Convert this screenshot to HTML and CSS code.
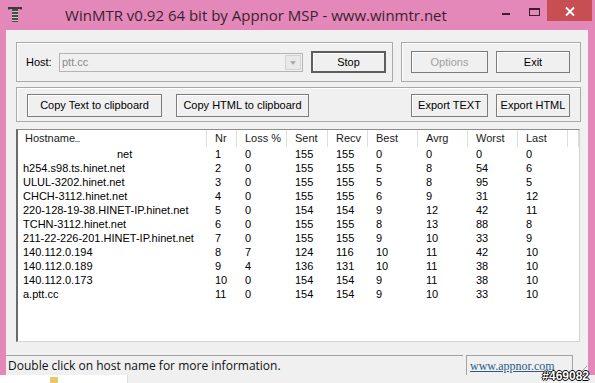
FILE: index.html
```html
<!DOCTYPE html>
<html lang="en">
<head>
    <meta charset="UTF-8">
    <title>WinMTR v0.92 64 bit by Appnor MSP - www.winmtr.net</title>
    <link rel="stylesheet" href="styles.css">
</head>
<body>
    <div class="window">
        <div class="titlebar">
            <svg class="app-icon" viewBox="0 0 14 15" xmlns="http://www.w3.org/2000/svg">
                <rect x="0" y="0" width="14" height="2" fill="#3a3a3a"/>
                <rect x="0" y="2" width="2" height="1" fill="#777"/>
                <rect x="12" y="2" width="2" height="1" fill="#777"/>
                <rect x="4" y="2" width="6" height="13" fill="#4a4a4a"/>
                <rect x="4" y="4" width="6" height="1" fill="#c8c8c8"/>
                <rect x="4" y="7" width="6" height="1" fill="#c8c8c8"/>
                <rect x="4" y="10" width="6" height="1" fill="#c8c8c8"/>
                <rect x="4" y="13" width="6" height="1" fill="#c8c8c8"/>
            </svg>
            <div class="title">WinMTR v0.92 64 bit by Appnor MSP - www.winmtr.net</div>
            <div class="caption-buttons">
                <div class="cap-btn cap-min">
                    <svg viewBox="0 0 29 20" xmlns="http://www.w3.org/2000/svg"><rect x="12" y="13" width="8" height="2" fill="#3b1f30"/></svg>
                </div>
                <div class="cap-btn cap-max">
                    <svg viewBox="0 0 28 20" xmlns="http://www.w3.org/2000/svg"><rect x="10.5" y="8.5" width="10" height="7" fill="none" stroke="#3b1f30"/><rect x="10" y="8" width="11" height="2" fill="#3b1f30"/></svg>
                </div>
                <div class="cap-btn cap-close">
                    <svg viewBox="0 0 45 20" xmlns="http://www.w3.org/2000/svg"><path d="M19 7 L27 15 M27 7 L19 15" stroke="#fff" stroke-width="1.8"/></svg>
                </div>
            </div>
        </div>

        <div class="client">
            <div class="panel">
                <div class="top-row">
                    <div class="group group-host">
                        <span class="host-label">Host:</span>
                        <div class="combo">
                            <span class="combo-text">ptt.cc</span>
                            <span class="combo-arrow">
                                <svg viewBox="0 0 15 15" xmlns="http://www.w3.org/2000/svg"><path d="M4 6 L11 6 L7.5 10 Z" fill="#a8a8a8"/></svg>
                            </span>
                        </div>
                        <button class="btn btn-stop">Stop</button>
                    </div>
                    <div class="group group-actions">
                        <button class="btn btn-options" disabled>Options</button>
                        <button class="btn btn-exit">Exit</button>
                    </div>
                </div>

                <div class="group group-export">
                    <button class="btn btn-copy-text">Copy Text to clipboard</button>
                    <button class="btn btn-copy-html">Copy HTML to clipboard</button>
                    <span class="spacer"></span>
                    <button class="btn btn-options">Export TEXT</button>
                    <button class="btn btn-exit">Export HTML</button>
                </div>

                <div class="list">
                    <div class="row list-head">
                        <span class="cell host"><span class="sorted">Hostname</span></span>
                        <span class="cell">Nr</span>
                        <span class="cell">Loss %</span>
                        <span class="cell">Sent</span>
                        <span class="cell">Recv</span>
                        <span class="cell">Best</span>
                        <span class="cell">Avrg</span>
                        <span class="cell">Worst</span>
                        <span class="cell">Last</span>
                        <span class="cell"></span>
                    </div>
                    <div class="row"><span class="cell host masked">net</span><span class="cell">1</span><span class="cell">0</span><span class="cell">155</span><span class="cell">155</span><span class="cell">0</span><span class="cell">0</span><span class="cell">0</span><span class="cell">0</span></div>
                    <div class="row"><span class="cell host">h254.s98.ts.hinet.net</span><span class="cell">2</span><span class="cell">0</span><span class="cell">155</span><span class="cell">155</span><span class="cell">5</span><span class="cell">8</span><span class="cell">54</span><span class="cell">6</span></div>
                    <div class="row"><span class="cell host">ULUL-3202.hinet.net</span><span class="cell">3</span><span class="cell">0</span><span class="cell">155</span><span class="cell">155</span><span class="cell">5</span><span class="cell">8</span><span class="cell">95</span><span class="cell">5</span></div>
                    <div class="row"><span class="cell host">CHCH-3112.hinet.net</span><span class="cell">4</span><span class="cell">0</span><span class="cell">155</span><span class="cell">155</span><span class="cell">6</span><span class="cell">9</span><span class="cell">31</span><span class="cell">12</span></div>
                    <div class="row"><span class="cell host">220-128-19-38.HINET-IP.hinet.net</span><span class="cell">5</span><span class="cell">0</span><span class="cell">154</span><span class="cell">154</span><span class="cell">9</span><span class="cell">12</span><span class="cell">42</span><span class="cell">11</span></div>
                    <div class="row"><span class="cell host">TCHN-3112.hinet.net</span><span class="cell">6</span><span class="cell">0</span><span class="cell">155</span><span class="cell">155</span><span class="cell">8</span><span class="cell">13</span><span class="cell">88</span><span class="cell">8</span></div>
                    <div class="row"><span class="cell host">211-22-226-201.HINET-IP.hinet.net</span><span class="cell">7</span><span class="cell">0</span><span class="cell">155</span><span class="cell">155</span><span class="cell">9</span><span class="cell">10</span><span class="cell">33</span><span class="cell">9</span></div>
                    <div class="row"><span class="cell host">140.112.0.194</span><span class="cell">8</span><span class="cell">7</span><span class="cell">124</span><span class="cell">116</span><span class="cell">10</span><span class="cell">11</span><span class="cell">42</span><span class="cell">10</span></div>
                    <div class="row"><span class="cell host">140.112.0.189</span><span class="cell">9</span><span class="cell">4</span><span class="cell">136</span><span class="cell">131</span><span class="cell">10</span><span class="cell">11</span><span class="cell">38</span><span class="cell">10</span></div>
                    <div class="row"><span class="cell host">140.112.0.173</span><span class="cell">10</span><span class="cell">0</span><span class="cell">154</span><span class="cell">154</span><span class="cell">9</span><span class="cell">11</span><span class="cell">38</span><span class="cell">10</span></div>
                    <div class="row"><span class="cell host">a.ptt.cc</span><span class="cell">11</span><span class="cell">0</span><span class="cell">154</span><span class="cell">154</span><span class="cell">9</span><span class="cell">10</span><span class="cell">33</span><span class="cell">10</span></div>
                </div>
            </div>

            <div class="statusbar">
                <div class="status-main">Double click on host name for more information.</div>
                <div class="status-link"><a href="#">www.appnor.com</a></div>
                <div class="grip">
                    <svg viewBox="0 0 12 12" xmlns="http://www.w3.org/2000/svg"><path d="M11 3 L3 11 M11 7 L7 11 M11 11 L11 11" stroke="#a8a8a8" stroke-width="1"/></svg>
                </div>
            </div>
        </div>
    </div>

    <div class="taskbar">
        <div class="taskbar-item"><span class="folder"></span></div>
    </div>

    <div class="watermark">#469082</div>
</body>
</html>
```

FILE: styles.css
```css
* {
    margin: 0;
    padding: 0;
    box-sizing: border-box;
}

body {
    width: 595px;
    height: 383px;
    overflow: hidden;
    position: relative;
    font-family: 'Liberation Sans', Arial, sans-serif;
    font-size: 11px;
    color: #000;
    background-color: #f0f0f0;
}

.window {
    height: 375px;
    background-color: #e388b8;
    display: flex;
    flex-direction: column;
}

/* Title bar */
.titlebar {
    height: 30px;
    display: flex;
    align-items: flex-start;
}

.app-icon {
    width: 14px;
    height: 15px;
    margin: 7px 0 0 8px;
}

.title {
    flex: 1;
    text-align: center;
    font-family: 'Open Sans', 'Noto Sans', sans-serif;
    font-size: 15px;
    line-height: 30px;
    color: #3b1f30;
}

.caption-buttons {
    display: flex;
    margin-right: 3px;
}

.cap-btn svg {
    display: block;
    width: 100%;
    height: 100%;
}

.cap-min {
    width: 29px;
    height: 20px;
}

.cap-max {
    width: 28px;
    height: 20px;
}

.cap-close {
    width: 45px;
    height: 21px;
    background-color: #c74f52;
}

/* Client area */
.client {
    flex: 1;
    margin: 0 7px 0 6px;
    background-color: #f0f0f0;
    display: flex;
    flex-direction: column;
}

.panel {
    flex: 1;
    padding: 12px 7px 0 10px;
    display: flex;
    flex-direction: column;
}

.top-row {
    display: flex;
    gap: 8px;
    height: 40px;
}

.group {
    border: 1px solid #a9a9a9;
    box-shadow: inset 1px 1px 0 #fff;
    display: flex;
    align-items: center;
}

.group-host {
    width: 377px;
    padding-left: 9px;
}

.host-label {
    width: 33px;
}

.combo {
    width: 244px;
    height: 19px;
    border: 1px solid #b4b4b4;
    background-color: #f0f0f0;
    display: flex;
    align-items: center;
}

.combo-text {
    flex: 1;
    padding-left: 2px;
    color: #8a8a8a;
}

.combo-arrow {
    width: 16px;
    height: 15px;
    margin-right: 1px;
    border: 1px solid #d2d2d2;
    background-color: #e9e9e9;
}

.combo-arrow svg {
    display: block;
    width: 100%;
    height: 100%;
}

.btn {
    height: 22px;
    border: 1px solid #7b7b7b;
    background-color: #f0f0f0;
    box-shadow: inset 1px 1px 0 #fff;
    font-family: inherit;
    font-size: 11px;
    color: #000;
}

.btn-stop {
    width: 75px;
    margin-left: 8px;
    border: 2px solid #5e5e5e;
}

.group-actions {
    flex: 1;
    padding-left: 9px;
    gap: 8px;
}

.btn-options {
    width: 77px;
}

.btn-options:disabled {
    color: #a0a0a0;
}

.btn-exit {
    width: 74px;
}

.group-export {
    margin-top: 5px;
    height: 35px;
    padding: 1px 10px 0;
    gap: 8px;
}

.group-export .btn {
    height: 23px;
}

.btn-copy-text {
    width: 135px;
    margin-right: 6px;
}

.btn-copy-html {
    width: 133px;
}

.spacer {
    flex: 1;
}

/* Result list */
.list {
    margin: 7px 1px 0 0;
    height: 213px;
    background-color: #fff;
    border-top: 1px solid #8e8e8e;
    border-left: 2px solid #6a6a6a;
    border-right: 1px solid #d4d4d4;
    border-bottom: 1px solid #d4d4d4;
}

.row {
    display: grid;
    grid-template-columns: 189px 30px 50px 41px 40px 50px 50px 50px 50px 1fr;
    height: 14px;
    line-height: 14px;
    white-space: nowrap;
}

.cell {
    padding-left: 8px;
    overflow: hidden;
}

.cell.host {
    padding-left: 5px;
}

.cell.masked {
    padding-left: 99px;
}

.list-head {
    height: 17px;
    line-height: 17px;
    color: #1a1a1a;
}

.list-head .cell {
    border-right: 1px solid #dedede;
}

.list-head .cell.host {
    padding-left: 7px;
}

.sorted::after {
    content: '';
    display: inline-block;
    width: 5px;
    border-bottom: 1px solid #9a9a9a;
}

/* Status bar */
.statusbar {
    height: 20px;
    display: flex;
    font-family: 'Open Sans', 'Noto Sans', sans-serif;
    font-size: 12px;
}

.status-main {
    flex: 1;
    border-top: 1px solid #a3a3a3;
    padding-left: 2px;
    line-height: 20px;
    color: #111;
}

.status-link {
    width: 107px;
    margin-left: 3px;
    border: 1px solid #a3a3a3;
    border-bottom: none;
    padding-left: 3px;
    line-height: 19px;
}

.status-link a {
    font-family: 'Liberation Serif', 'Times New Roman', serif;
    font-size: 12px;
    color: #2a5b86;
}

.grip {
    width: 15px;
    display: flex;
    align-items: flex-end;
    justify-content: flex-end;
}

.grip svg {
    width: 12px;
    height: 12px;
}

/* Strip under the window */
.taskbar {
    height: 8px;
    display: flex;
    background-color: #f0f0f0;
}

.taskbar-item {
    width: 128px;
    background-color: #fff;
    border-right: 1px solid #dcdcdc;
    padding-left: 50px;
}

.folder {
    display: block;
    width: 8px;
    height: 6px;
    margin-top: 2px;
    background-color: #e8c86a;
}

.watermark {
    position: absolute;
    right: 6px;
    bottom: 0;
    font-family: 'Liberation Sans', Arial, sans-serif;
    font-weight: bold;
    font-size: 12px;
    line-height: 13px;
    color: #fff;
    text-shadow: -1px 0 #000, 1px 0 #000, 0 -1px #000, 0 1px #000;
}
```
